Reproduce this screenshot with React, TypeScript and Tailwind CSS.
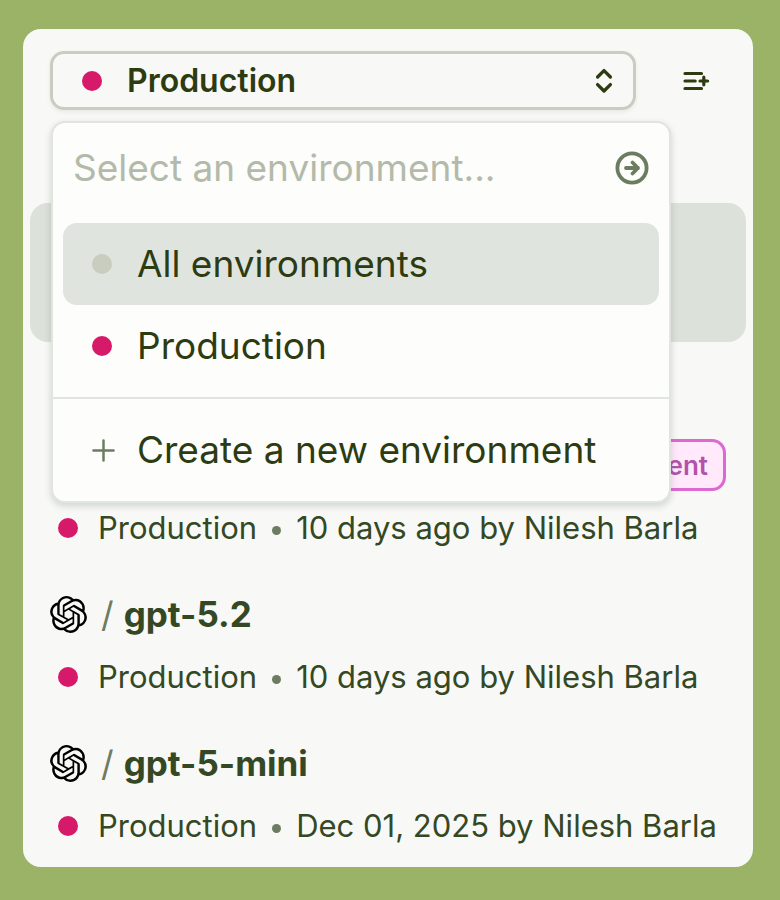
/**
 * Environment Picker
 * Sidebar panel with an environment dropdown above the list of prompt versions
 */

import { SiOpenai } from "react-icons/si";

interface PromptVersion {
  id: number;
  model: string;
  environment: string;
  updated: string;
}

const versions: PromptVersion[] = [
  {
    id: 1,
    model: "gpt-5.2",
    environment: "Production",
    updated: "10 days ago by Nilesh Barla",
  },
  {
    id: 2,
    model: "gpt-5-mini",
    environment: "Production",
    updated: "Dec 01, 2025 by Nilesh Barla",
  },
];

function ChevronsIcon() {
  return (
    <svg
      viewBox="0 0 18 26"
      className="h-[26px] w-[18px]"
      fill="none"
      stroke="currentColor"
      strokeWidth="3.3"
      strokeLinecap="round"
      strokeLinejoin="round"
    >
      <path d="M2.6 9 9 2.6 15.4 9M2.6 16.6 9 23l6.4-6.4" />
    </svg>
  );
}

function ListAddIcon() {
  return (
    <svg
      viewBox="0 0 28 20"
      className="h-5 w-7"
      fill="none"
      stroke="currentColor"
      strokeWidth="3.2"
      strokeLinecap="round"
    >
      <path d="M3 2.5h16.5M3 10h10.2M3 17.5h16.5M18 10h7.6M21.8 6.2v7.6" />
    </svg>
  );
}

function SubmitIcon() {
  return (
    <svg
      viewBox="0 0 34 34"
      className="size-[34px]"
      fill="none"
      stroke="currentColor"
      strokeWidth="3.8"
      strokeLinecap="round"
      strokeLinejoin="round"
    >
      <circle cx="17" cy="17" r="14.6" />
      <path d="M11 17h12M17.5 11.5 23 17l-5.5 5.5" />
    </svg>
  );
}

function PlusIcon() {
  return (
    <svg
      viewBox="0 0 24 24"
      className="size-[23px]"
      fill="none"
      stroke="currentColor"
      strokeWidth="2.6"
      strokeLinecap="round"
    >
      <path d="M12 1.5v21M1.5 12h21" />
    </svg>
  );
}

function VersionMeta({
  environment,
  updated,
}: {
  environment: string;
  updated: string;
}) {
  return (
    <div className="flex h-[52px] items-center pl-2 text-[31px] whitespace-nowrap text-[#344824]">
      <span className="mr-5 size-5 shrink-0 rounded-full bg-[#d61a69]" />
      <span>{environment}</span>
      <span className="mx-[15px] mt-1 size-[9px] shrink-0 rounded-full bg-[#6c7c60]" />
      <span>{updated}</span>
    </div>
  );
}

function EnvironmentMenu() {
  return (
    <div className="absolute top-full right-[82px] left-7 mt-[11px] rounded-[14px] border-2 border-[#e0e5df] bg-[#fdfdfb] text-[37px] shadow-[0_3px_7px_rgba(50,70,40,0.2)]">
      {/* Search input */}
      <div className="flex h-[89px] items-center gap-4 pr-5 pl-5">
        <input
          type="text"
          aria-label="Select an environment"
          placeholder="Select an environment..."
          className="min-w-0 flex-1 bg-transparent text-[#2c3b10] placeholder-[#b3baaa] outline-none"
        />
        <button type="button" aria-label="Go" className="text-[#6c7c60]">
          <SubmitIcon />
        </button>
      </div>

      {/* Options */}
      <div className="mt-[11px] flex flex-col px-[10px] pb-[10px]">
        <button
          type="button"
          className="flex h-[82px] items-center gap-[25px] rounded-[14px] bg-[#e0e4df] pl-[29px] text-left"
        >
          <span className="size-5 rounded-full bg-[#c8cdbf]" />
          All environments
        </button>
        <button
          type="button"
          className="flex h-[82px] items-center gap-[25px] rounded-[14px] pl-[29px] text-left"
        >
          <span className="size-5 rounded-full bg-[#d61a69]" />
          Production
        </button>
      </div>

      {/* Create action */}
      <div className="border-t-2 border-[#e0e5df] px-[10px] py-[10px]">
        <button
          type="button"
          className="flex h-[82px] w-full items-center gap-[22px] rounded-[14px] pl-[29px] text-left whitespace-nowrap"
        >
          <span className="text-[#6c7c60]">
            <PlusIcon />
          </span>
          Create a new environment
        </button>
      </div>
    </div>
  );
}

export default function App() {
  return (
    <main className="min-h-screen bg-[#9bb367] pt-[29px] pr-[27px] pb-[33px] pl-[23px] font-['Inter',sans-serif] text-[#2c3b10]">
      <section className="overflow-hidden rounded-[18px] bg-[#f8f8f7] pb-[3px]">
        <header className="relative z-10 flex items-center pt-[22px] pr-8 pl-[27px]">
          <button
            type="button"
            aria-expanded="true"
            className="flex h-[59px] min-w-0 flex-1 items-center rounded-[14px] border-3 border-[#c8cdbf] pr-5 pl-[29px] text-[32px] font-semibold shadow-[0_2px_4px_rgba(50,70,40,0.08)]"
          >
            <span className="mr-[25px] size-5 rounded-full bg-[#d61a69]" />
            <span className="flex-1 text-left">Production</span>
            <ChevronsIcon />
          </button>
          <button
            type="button"
            aria-label="Add to list"
            className="ml-[35px] flex size-[50px] items-center justify-center"
          >
            <ListAddIcon />
          </button>
          <EnvironmentMenu />
        </header>

        <ul className="mt-[93px] px-[7px]">
          {/* Selected version */}
          <li className="mb-[85px] h-[139px] rounded-[18px] bg-[#dce1da]" />

          <li className="mb-[10px] flex flex-col gap-[11px] px-5 py-3">
            <div className="flex h-[52px] items-center justify-end">
              <span className="flex h-[52px] w-[200px] items-center justify-end rounded-[14px] border-3 border-[#dc69d3] bg-[#ffe9fb] pr-[15px] text-[26px] font-semibold text-[#b153a8]">
                ent
              </span>
            </div>
            <VersionMeta
              environment="Production"
              updated="10 days ago by Nilesh Barla"
            />
          </li>

          {versions.map((version) => (
            <li
              key={version.id}
              className="mb-[10px] flex flex-col gap-[11px] px-5 py-3 last:mb-0"
            >
              <div className="flex h-[52px] items-center text-[35px]">
                <SiOpenai className="size-[37px] shrink-0 text-black" />
                <span className="mr-[10px] ml-[14px] text-[#6c7c60]">/</span>
                <span className="font-bold text-[#344824]">
                  {version.model}
                </span>
              </div>
              <VersionMeta
                environment={version.environment}
                updated={version.updated}
              />
            </li>
          ))}
        </ul>
      </section>
    </main>
  );
}
